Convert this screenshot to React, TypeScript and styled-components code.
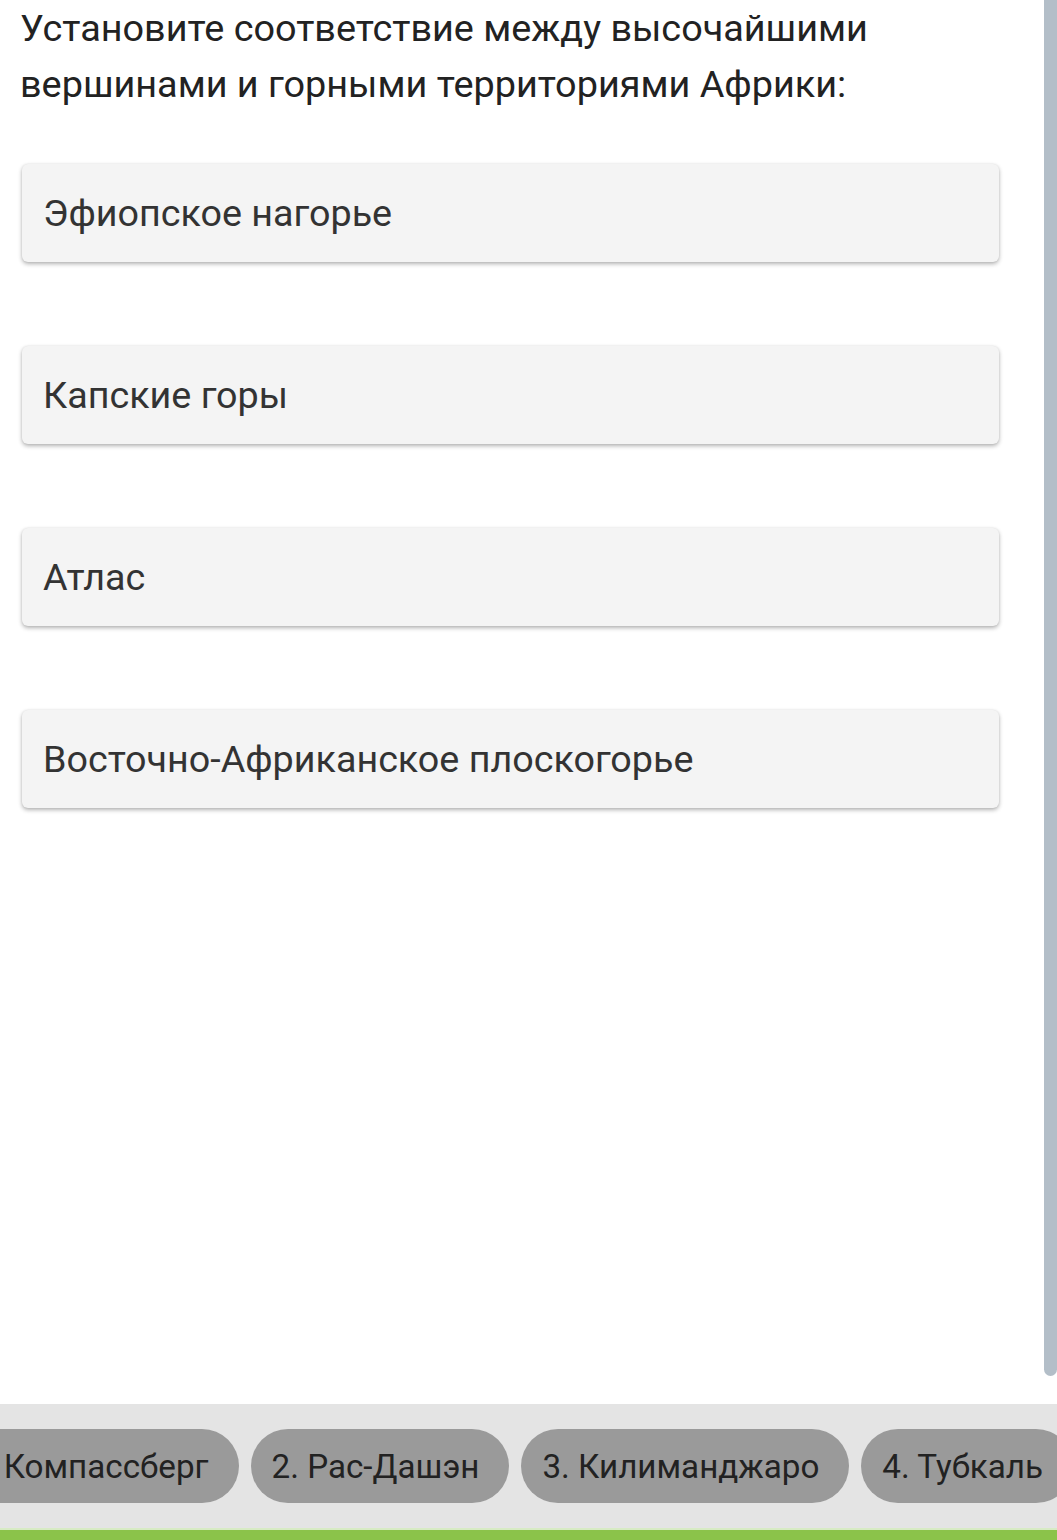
import React from 'react';
import styled, { createGlobalStyle } from 'styled-components';

const GlobalStyle = createGlobalStyle`
  html, body {
    margin: 0;
    padding: 0;
    background: #fff;
    font-family: Roboto, 'Liberation Sans', sans-serif;
  }
`;

const Page = styled.div`
  width: 1057px;
  height: 1540px;
  position: relative;
  display: flex;
  flex-direction: column;
  overflow: hidden;
  background: #fff;
`;

const Content = styled.div`
  flex: 1;
  padding: 0 58px 0 20px;
`;

const Question = styled.div`
  font-size: 37.8px;
  line-height: 56px;
  color: #222;
`;

const CardList = styled.div`
  display: flex;
  flex-direction: column;
  gap: 84px;
  margin-top: 52px;
  padding-left: 2px;
`;

const Card = styled.div`
  height: 98px;
  box-sizing: border-box;
  display: flex;
  align-items: center;
  padding-left: 21px;
  background: #f4f4f4;
  border-radius: 6px;
  box-shadow: 0 2px 4px rgba(0, 0, 0, 0.3), 0 0 2px rgba(0, 0, 0, 0.08);
  font-size: 37.7px;
  color: #333;
`;

const ScrollThumb = styled.div`
  position: absolute;
  top: 0;
  right: 0;
  width: 13px;
  height: 1376px;
  background: #b3bec8;
  border-radius: 0 0 7px 7px;
`;

const BottomBar = styled.div`
  height: 124px;
  background: #e4e4e4;
  display: flex;
  align-items: center;
  overflow: hidden;
`;

// the chip row is scrolled a little to the right, so the first chip is cut
const ChipTrack = styled.div`
  display: flex;
  gap: 12px;
  margin-left: -53px;
  flex-shrink: 0;
`;

const Chip = styled.div`
  height: 74px;
  padding: 0 30px 0 21px;
  border-radius: 37px;
  background: #9a9a9a;
  display: flex;
  align-items: center;
  font-size: 33.2px;
  color: #222;
  white-space: nowrap;
  flex-shrink: 0;
`;

const GreenLine = styled.div`
  height: 10px;
  background: #8bc34a;
  border-top: 2px solid #d7ebc4;
`;

const territories = [
  'Эфиопское нагорье',
  'Капские горы',
  'Атлас',
  'Восточно-Африканское плоскогорье',
];

const peaks = ['1. Компассберг', '2. Рас-Дашэн', '3. Килиманджаро', '4. Тубкаль'];

const App: React.FC = () => {
  return (
    <Page>
      <GlobalStyle />
      <Content>
        <Question>
          Установите соответствие между высочайшими
          <br />
          вершинами и горными территориями Африки:
        </Question>
        <CardList>
          {territories.map((t) => (
            <Card key={t}>{t}</Card>
          ))}
        </CardList>
      </Content>
      <ScrollThumb />
      <BottomBar>
        <ChipTrack>
          {peaks.map((p) => (
            <Chip key={p}>{p}</Chip>
          ))}
        </ChipTrack>
      </BottomBar>
      <GreenLine />
    </Page>
  );
};

export default App;
